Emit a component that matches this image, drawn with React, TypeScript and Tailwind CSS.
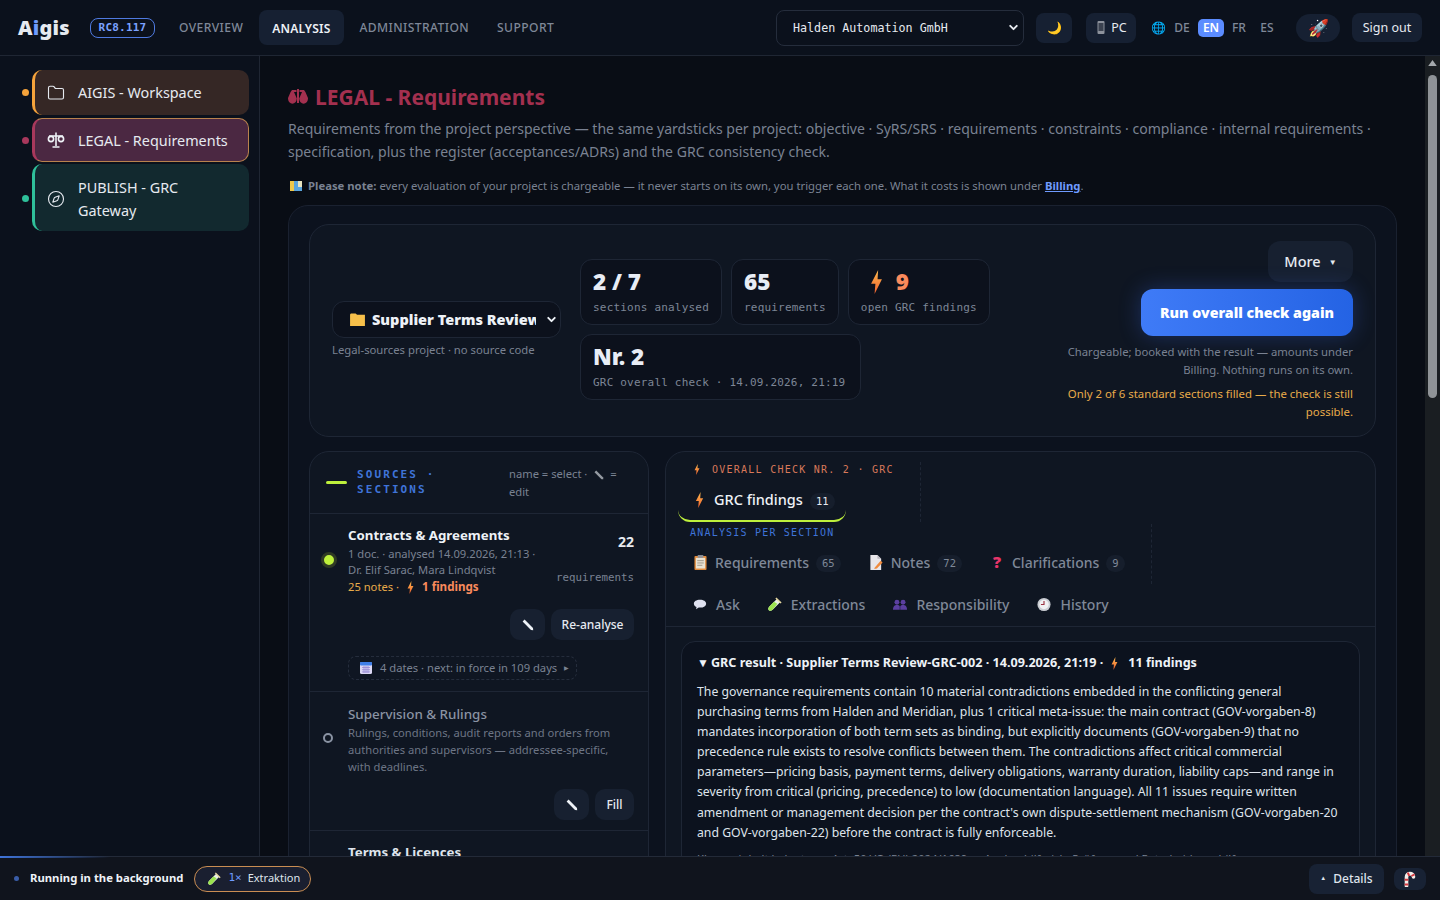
import React from "react";
import { ChevronDown, Folder, Compass } from "lucide-react";

const sans = "font-['Noto_Sans',sans-serif]";
const mono = "font-['DejaVu_Sans_Mono',monospace]";

function Bolt({ className = "w-[12px] h-[20px]" }: { className?: string }) {
  return (
    <svg viewBox="0 0 12 22" className={`shrink-0 ${className}`}>
      <defs>
        <linearGradient id="b" x1="0" y1="0" x2="0" y2="1">
          <stop offset="0" stopColor="#fdba4d" />
          <stop offset="1" stopColor="#f0602f" />
        </linearGradient>
      </defs>
      <path d="M7.5 0 L1 12.5 H5 L4.2 22 L11 8.5 H7 Z" fill="url(#b)" />
    </svg>
  );
}

function Pencil({ className = "w-[12px] h-[12px]" }: { className?: string }) {
  return (
    <svg viewBox="0 0 12 12" className={className}>
      <path d="M0.6 2.6 L2.6 0.6 L11 9 L11.2 11.2 L9 11 Z" fill="#eef2f7" />
    </svg>
  );
}

function ScaleIcon() {
  return (
    <svg viewBox="0 0 18 18" className="w-[18px] h-[18px]" fill="none" stroke="#eef2f7" strokeWidth="1.6">
      <path d="M9 1.5 V15 M5.5 16 H12.5 M2 5 H16" />
      <circle cx="4" cy="8" r="2.6" />
      <circle cx="14" cy="8" r="2.6" />
    </svg>
  );
}

function RedScale() {
  return (
    <svg viewBox="0 0 20 16" className="w-[20px] h-[16px] shrink-0" fill="#a3304f">
      <path d="M4 1 H8.5 V3 H6 L8.6 9 H0 L2.6 3 Z" />
      <path d="M0 9 H8.8 C8.8 16.5 0 16.5 0 9 Z" />
      <path d="M11.5 1 H16 L17.4 3 L20 9 H11.4 L14 3 H11.5 Z" />
      <path d="M11.2 9 H20 C20 16.5 11.2 16.5 11.2 9 Z" />
      <rect x="9" y="0" width="2" height="14" />
    </svg>
  );
}

const TestTube = ({ className = "w-[15px] h-[15px]" }: { className?: string }) => (
  <svg viewBox="0 0 16 16" className={`shrink-0 ${className}`}>
    <path d="M10.5 2 L14 5.5 L6 13.5 C4.6 14.9 3 15 2 14 C1 13 1.1 11.4 2.5 10 Z" fill="#e8f0e4" />
    <path d="M7.4 5.1 L11 7.2 L6 13.5 C4.6 14.9 3 15 2 14 C1 13 1.1 11.4 2.5 10 Z" fill="#9be34f" />
    <path d="M9.5 1 L15 6.5" stroke="#e8d9a0" strokeWidth="1.6" />
  </svg>
);

const Clip = () => (
  <svg viewBox="0 0 14 16" className="w-[13px] h-[15px]">
    <rect x="0.5" y="1" width="13" height="15" rx="1" fill="#e08a3c" />
    <rect x="2" y="3" width="10" height="11.5" fill="#e9e2d2" />
    <rect x="4" y="0" width="6" height="3" fill="#8d9199" />
    <path d="M3.5 6 H10.5 M3.5 8.5 H10.5 M3.5 11 H9" stroke="#9a9486" />
  </svg>
);

const Memo = () => (
  <svg viewBox="0 0 14 16" className="w-[14px] h-[15px]">
    <path d="M1 0 H8.5 L12.5 4 V16 H1 Z" fill="#e8e6ea" />
    <path d="M8.5 0 L12.5 4 H8.5 Z" fill="#b9b7bf" />
    <path d="M6 13 L12 6 L14 8 L8 14.5 L5 15 Z" fill="#f08a3c" />
  </svg>
);

const Bubble = () => (
  <svg viewBox="0 0 16 14" className="w-[15px] h-[13px]">
    <path d="M8 1.5 C12.2 1.5 15 3.4 15 6 C15 8.6 12.2 10.5 8 10.5 L6.5 10.5 L3.5 12.5 L4 9.8 C2.2 9 1 7.6 1 6 C1 3.4 3.8 1.5 8 1.5 Z" fill="#dfe1f0" />
  </svg>
);

const People = () => (
  <svg viewBox="0 0 16 14" className="w-[15px] h-[13px]" fill="#5b3fa0">
    <circle cx="4.5" cy="4.5" r="2.8" />
    <circle cx="11.5" cy="4.5" r="2.8" />
    <path d="M0 13 C0 9 2 7.5 4.5 7.5 C6 7.5 7.2 8 7.7 9 V13 Z" />
    <path d="M16 13 C16 9 14 7.5 11.5 7.5 C10 7.5 8.8 8 8.3 9 V13 Z" />
  </svg>
);

const Clock = () => (
  <svg viewBox="0 0 16 16" className="w-[15px] h-[15px]">
    <circle cx="8" cy="8" r="7.5" fill="#c9ccd2" />
    <circle cx="8" cy="8" r="5.4" fill="#f0f0f2" />
    <path d="M8 4 V8 H4.5" stroke="#9a3040" strokeWidth="1.3" fill="none" />
  </svg>
);

const Cal = () => (
  <svg viewBox="0 0 12 12" className="w-[12px] h-[12px] mr-[8px] shrink-0">
    <rect x="0" y="0" width="12" height="12" rx="1.5" fill="#dcd8f4" />
    <rect x="0" y="0" width="12" height="3.4" rx="1" fill="#3f7fe8" />
    <path d="M2 5.5 H10 M2 7.7 H10 M2 9.9 H10 M4 4 V11 M6 4 V11 M8 4 V11" stroke="#8e7fd0" strokeWidth="0.7" />
  </svg>
);

const Cane = () => (
  <svg viewBox="0 0 14 16" className="w-[14px] h-[16px]">
    <path d="M3.5 15 V6 C3.5 1.5 10.5 1.5 10.5 6" fill="none" stroke="#f4efea" strokeWidth="3.6" strokeLinecap="round" />
    <path d="M3.5 14.5 V12.5 M3.5 9.8 V7.8 M4.6 3.6 L6.4 2.8 M9.6 3.4 L10.4 5" fill="none" stroke="#d8383f" strokeWidth="3.6" />
  </svg>
);

const Phone = () => (
  <svg viewBox="0 0 8 13" className="w-[8px] h-[13px]">
    <rect x="0.5" y="0" width="7" height="13" rx="1" fill="#8d929c" />
    <rect x="1.5" y="2" width="5" height="8" fill="#3b4250" />
  </svg>
);

const MapNote = () => (
  <svg viewBox="0 0 12 10" className="inline w-[12px] h-[10px] mr-[6px] align-[-1px]">
    <rect width="12" height="10" fill="#5aa4dc" />
    <path d="M0 0 H4 V10 H0 Z" fill="#f0c84a" />
    <path d="M8 0 H12 V6 H8 Z" fill="#e8e4c0" />
  </svg>
);

function SideItem({ label, dot, bg, edge, icon }: { label: string; dot: string; bg: string; edge: string; icon: React.ReactNode }) {
  return (
    <div className="flex items-center">
      <span className={`w-[7px] h-[7px] rounded-full mr-[3px] shrink-0 ${dot}`} />
      <div className={`w-[217px] rounded-[10px] flex items-center gap-[13px] pl-[12px] pr-[12px] text-[14.4px] leading-[23px] text-[#e6eaf0] ${bg} ${edge}`}>
        <span className="shrink-0 w-[18px] flex justify-center">{icon}</span>
        <span>{label}</span>
      </div>
    </div>
  );
}

function Stat({ value, label, wide }: { value: React.ReactNode; label: string; wide?: boolean }) {
  return (
    <div className={`h-[66px] rounded-[12px] border border-[#1e2635] bg-[#0c111c] px-[12px] pt-[6px] ${wide ? "w-[281px]" : ""}`}>
      <div className={`${sans} font-black text-[22.5px] leading-[32px] text-[#e8edf5]`}>{value}</div>
      <div className={`${mono} text-[11px] tracking-[0.2px] leading-[16px] mt-[2px] text-[#7d8696] whitespace-nowrap`}>{label}</div>
    </div>
  );
}

function Tab({ icon, label, count, active, wide }: { icon: React.ReactNode; label: string; count?: string; active?: boolean; wide?: boolean }) {
  return (
    <div className={`flex items-center h-[42px] px-[14px] ${wide ? "gap-[9px]" : "gap-[8px]"} font-medium whitespace-nowrap ${active ? "text-[14.5px] text-[#eef2f7] border-b-2 border-[#bef03c] rounded-b-[12px]" : "text-[14px] text-[#7f8898]"}`}>
      <span className="flex items-center w-[14px] justify-center shrink-0">{icon}</span>
      <span>{label}</span>
      {count && <span className={`${mono} -ml-[1px] mt-[3px] text-[10.5px] rounded-full bg-[#161e2c] px-[6px] py-[1px] ${active ? "text-[#e6eaf0]" : "text-[#7f8898]"}`}>{count}</span>}
    </div>
  );
}

export default function App() {
  return (
    <div className={`${sans} h-screen w-full flex flex-col overflow-hidden bg-[#090d15] text-[#e6eaf0]`}>
      {/* top bar */}
      <header className="h-[56px] shrink-0 border-b border-[#1f2633] bg-[#0b111c] flex items-center pl-[18px] pr-[18px]">
        <div className="text-[20px] font-black leading-none tracking-[0.2px] w-[72px]">A<span className="text-[#6f9bff]">i</span>gis</div>
        <span className={`${mono} w-[65px] pt-[1px] justify-center text-[11px] tracking-[0.2px] text-[#7ba2ff] border border-[#4f7ae0] rounded-[8px] h-[20px] flex items-center font-semibold`}>RC8.117</span>
        <nav className="flex items-center gap-[3px] ml-[11px] text-[12.1px] tracking-[0.4px] font-medium text-[#7f8898]">
          <span className="px-[13px] pt-[2px]">OVERVIEW</span>
          <span className="px-[13px] h-[35px] pt-[2px] flex items-center rounded-[8px] bg-[#162032] text-[#eef2f7] text-[12px] tracking-[0.2px] font-semibold">ANALYSIS</span>
          <span className="px-[13px] pt-[2px]">ADMINISTRATION</span>
          <span className="px-[13px] pt-[2px] -ml-[1px]">SUPPORT</span>
        </nav>
        <div className="ml-auto flex items-center">
          <div className={`${mono} w-[248px] h-[36px] rounded-[8px] border border-[#252d3c] bg-[#0b111c] flex items-center justify-between pl-[16px] pr-[3px] text-[11.7px] font-medium text-[#e6eaf0]`}>
            <span className="pt-[2px]">Halden Automation GmbH</span>
            <ChevronDown className="w-[13px] h-[13px]" strokeWidth={3.5} />
          </div>
          <div className="ml-[12px] w-[36px] h-[30px] rounded-[8px] bg-[#162032] flex items-center justify-center text-[12px]">🌙</div>
          <div className="ml-[14px] w-[50px] h-[30px] rounded-[8px] bg-[#162032] flex items-center justify-center text-[12.5px] gap-[6px] pl-[2px]"><Phone /><span className="pt-[2px]">PC</span></div>
          <span className="ml-[15px] w-[13px] text-[12px] leading-none overflow-visible">🌐</span>
          <div className="ml-[8px] flex items-center text-[12px] text-[#7f8898] font-medium">
            <span className="w-[26px] text-center pr-[6px]">DE</span>
            <span className="w-[26px] h-[18px] leading-[18px] text-center rounded-[5px] bg-[#5b8cff] text-white font-semibold">EN</span>
            <span className="w-[30px] text-center">FR</span>
            <span className="w-[26px] text-center">ES</span>
          </div>
          <div className="ml-[16px] w-[44px] h-[28px] rounded-full bg-[#162032] flex items-center justify-center text-[17px]">🚀</div>
          <div className="ml-[12px] w-[70px] h-[29px] pt-[2px] rounded-[8px] bg-[#162032] flex items-center justify-center text-[12.5px]">Sign out</div>
        </div>
      </header>

      <div className="flex flex-1 min-h-0">
        {/* sidebar */}
        <aside className="w-[260px] shrink-0 border-r border-[#1f2633] bg-[#0b111c] pl-[22px] pt-[14px] flex flex-col gap-[3px]">
          <SideItem label="AIGIS - Workspace" dot="bg-[#f5a33b]" bg="bg-[#352725] py-[11px]" edge="border-l-[3px] border-[#f5a33b]" icon={<Folder className="w-[18px] h-[18px]" strokeWidth={1.5} />} />
          <SideItem label="LEGAL - Requirements" dot="bg-[#a8385c]" bg="bg-[#4b2842] py-[9.5px]" edge="border-[1.5px] border-l-[3px] border-[#b9824d] border-l-[#a8385c]" icon={<ScaleIcon />} />
          <SideItem label="PUBLISH - GRC Gateway" dot="bg-[#2fc09a]" bg="bg-[#12292f] pt-[12px] pb-[9px] -mt-[1px]" edge="border-l-[3px] border-[#2fc09a]" icon={<Compass className="w-[18px] h-[18px]" strokeWidth={1.5} />} />
        </aside>

        {/* main */}
        <main className="flex-1 min-w-0 overflow-y-auto [scrollbar-width:none] bg-[#090d15] pl-[28px] pr-[28px] pt-[26px]">
          <h1 className="flex items-center gap-[7px] text-[21px] font-bold leading-[30px] text-[#a3304f]"><RedScale /> LEGAL - Requirements</h1>
          <p className="mt-[5px] text-[14.05px] leading-[23px] text-[#7a8292]">
            Requirements from the project perspective — the same yardsticks per project: objective · SyRS/SRS · requirements · constraints · compliance · internal requirements · specification, plus the register (acceptances/ADRs) and the GRC consistency check.
          </p>
          <p className="mt-[14px] text-[11.3px] leading-[18px] text-[#7a8292] pl-[2px]">
            <MapNote /><b className="font-bold">Please note:</b> every evaluation of your project is chargeable — it never starts on its own, you trigger each one. What it costs is shown under <span className="font-bold underline text-[#6f9bff]">Billing</span>.
          </p>

          <section className="mt-[10px] rounded-[20px] border border-[#1a2130] bg-[#0c121e] px-[20px] pt-[18px] pb-[500px]">
            {/* summary */}
            <div className="h-[213px] rounded-[20px] border border-[#1e2635] bg-[#0f1622] flex items-center pl-[22px] pr-[22px]">
              <div className="w-[248px] shrink-0 -mt-[1px]">
                <div className="w-[229px] h-[37px] rounded-[12px] border border-[#1e2635] bg-[#0c111c] flex items-center pl-[17px] pr-[2px] text-[14.5px] font-black text-[#eef2f7] whitespace-nowrap">
                  <svg viewBox="0 0 16 14" className="w-[15px] h-[13px] mr-[7px] shrink-0"><path d="M0 2 C0 1 1 0.5 1.5 0.5 H6 L7.5 2 H16 V14 H0 Z" fill="#f7c04a" /></svg>
                  <span className="w-[164px] overflow-hidden">Supplier Terms Review-GRC</span>
                  <ChevronDown className="w-[13px] h-[13px] ml-auto shrink-0" strokeWidth={3.5} />
                </div>
                <p className="mt-[3px] text-[11.3px] leading-[18px] text-[#7a8292]">Legal-sources project · no source code</p>
              </div>
              <div className="flex flex-col gap-[9px] -mt-[3px]">
                <div className="flex gap-[9px]">
                  <Stat value="2 / 7" label="sections analysed" />
                  <Stat value="65" label="requirements" />
                  <Stat value={<span className="flex items-center gap-[13px] pl-[9px] text-[#fa8a5c]"><Bolt className="w-[13px] h-[24px]" />9</span>} label="open GRC findings" />
                </div>
                <Stat wide value="Nr. 2" label="GRC overall check · 14.09.2026, 21:19" />
              </div>
              <div className="ml-auto w-[300px] flex flex-col items-end self-start pt-[16px]">
                <div className="w-[85px] h-[41px] rounded-[12px] bg-[#172030] flex items-center justify-center gap-[8px] text-[14.5px] font-medium">More <span className="text-[8px]">▼</span></div>
                <div className="mt-[7px] w-[212px] h-[47px] rounded-[12px] bg-gradient-to-r from-[#3f7bf7] to-[#2463e4] shadow-[0_0_22px_rgba(59,110,240,0.3)] flex items-center justify-center text-[14.2px] font-black text-white">Run overall check again</div>
                <p className="mt-[7px] text-right text-[11.3px] leading-[18px] text-[#7a8292]">Chargeable; booked with the result — amounts under Billing. Nothing runs on its own.</p>
                <p className="mt-[6px] text-right text-[11.4px] leading-[18px] text-[#e8ab4a]">Only 2 of 6 standard sections filled — the check is still possible.</p>
              </div>
            </div>

            <div className="mt-[14px] flex gap-[16px] items-start">
              {/* sources */}
              <div className="w-[340px] shrink-0 rounded-t-[20px] border border-[#1e2635] bg-[#0f1622]">
                <div className="h-[62px] flex items-center pl-[16px] pr-[20px] border-b border-[#1e2635]">
                  <span className="w-[21px] h-[3px] rounded-full bg-[#bef03c] shrink-0" />
                  <span className={`${mono} ml-[10px] w-[100px] shrink-0 -mt-[2px] font-semibold text-[11px] leading-[15px] tracking-[2.1px] text-[#3f74d9]`}>SOURCES · SECTIONS</span>
                  <span className="ml-[52px] text-[11.2px] leading-[18px] text-[#7a8292]">name = select · <Pencil className="inline w-[10px] h-[10px] opacity-60 ml-[4px] mr-[3px]" /> = edit</span>
                </div>
                <div className="h-[178px] border-b border-[#1e2635] pl-[11px] pr-[14px] pt-[12px]">
                  <div className="flex items-start">
                    <span className="mt-[26px] w-[16px] h-[16px] rounded-full bg-[#bef03c] border-[3px] border-[#2f3a24] shrink-0" />
                    <div className="ml-[11px] flex-1 min-w-0">
                      <div className="text-[13.25px] leading-[18px] font-bold text-[#eef2f7]">Contracts &amp; Agreements</div>
                      <p className="text-[11.2px] leading-[16px] text-[#7a8292] w-[196px] mt-[2px]">1 doc. · analysed 14.09.2026, 21:13 · Dr. Elif Sarac, Mara Lindqvist</p>
                      <div className="flex items-center text-[11.2px] leading-[18px] text-[#e8ab4a]">25 notes · <Bolt className="mx-[8px] w-[7px] h-[13px]" /><span className="font-bold text-[#fa8a5c] text-[11.6px]">1 findings</span></div>
                    </div>
                    <div className="text-right shrink-0 -ml-[40px]">
                      <div className="text-[14px] font-bold leading-[18px] mt-[7px]">22</div>
                      <div className={`${mono} text-[10.8px] text-[#7a8292] mt-[19px]`}>requirements</div>
                    </div>
                  </div>
                  <div className="mt-[13px] flex justify-end gap-[6px]">
                    <div className="w-[35px] h-[31px] rounded-[10px] bg-[#172030] flex items-center justify-center"><Pencil /></div>
                    <div className="w-[83px] h-[31px] rounded-[10px] bg-[#172030] flex items-center justify-center text-[12px] font-medium">Re-analyse</div>
                  </div>
                  <div className="mt-[16px] ml-[27px] w-[229px] h-[24px] rounded-[8px] border border-dashed border-[#252d3c] flex items-center pl-[11px] text-[11.2px] text-[#7a8292] whitespace-nowrap">
                    <Cal />4 dates · next: in force in 109 days <span className="text-[6px] ml-[7px]">▶</span>
                  </div>
                </div>
                <div className="h-[139px] border-b border-[#1e2635] pl-[13px] pr-[14px] pt-[13px]">
                  <div className="flex items-start">
                    <span className="mt-[28px] w-[10px] h-[10px] rounded-full border-2 border-[#8a93a3] shrink-0" />
                    <div className="ml-[15px]">
                      <div className="text-[13.4px] leading-[18px] font-medium text-[#8a93a3]">Supervision &amp; Rulings</div>
                      <p className="text-[11.2px] leading-[17px] text-[#6d7585] mt-[1px] w-[270px]">Rulings, conditions, audit reports and orders from authorities and supervisors — addressee-specific, with deadlines.</p>
                    </div>
                  </div>
                  <div className="mt-[14px] flex justify-end gap-[6px]">
                    <div className="w-[35px] h-[31px] rounded-[10px] bg-[#172030] flex items-center justify-center"><Pencil /></div>
                    <div className="w-[39px] h-[31px] rounded-[10px] bg-[#172030] flex items-center justify-center text-[12px] font-medium">Fill</div>
                  </div>
                </div>
                <div className="h-[120px] pl-[38px] pt-[12px] text-[13.25px] font-bold leading-[18px] text-[#dfe4ec]">Terms &amp; Licences</div>
              </div>

              {/* analysis */}
              <div className="flex-1 min-w-0 rounded-t-[20px] border border-[#1e2635] bg-[#0f1622]">
                <div className="border-b border-[#1e2635] pt-[10px]">
                  <div className="pl-[12px] w-[255px] h-[60px] border-r border-dashed border-[#1e2635]">
                    <div className={`${mono} pl-[16px] h-[14px] flex items-center text-[10px] tracking-[1.25px] text-[#d9795a] font-medium`}><Bolt className="w-[6px] h-[11px] mr-[12px]" />OVERALL CHECK NR. 2 · GRC</div>
                    <div className="w-[168px] mt-[4px]"><Tab active icon={<Bolt className="w-[9px] h-[16px]" />} label="GRC findings" count="11" /></div>
                  </div>
                  <div className="mt-[2px] pl-[24px] pt-[2px] w-[486px] h-[60px] border-r border-dashed border-[#1e2635]">
                    <div className={`${mono} h-[14px] leading-[14px] text-[10px] tracking-[1.2px] text-[#3f74d9] font-medium`}>ANALYSIS PER SECTION</div>
                    <div className="-ml-[11px] flex mt-[1px]">
                      <Tab icon={<Clip />} label="Requirements" count="65" />
                      <Tab icon={<Memo />} label="Notes" count="72" />
                      <Tab icon={<span className="text-[#e8356a] font-black text-[16px]">?</span>} label="Clarifications" count="9" />
                    </div>
                  </div>
                  <div className="pl-[13px] flex h-[43px] -mt-[1px]">
                    <Tab wide icon={<Bubble />} label="Ask" />
                    <Tab wide icon={<TestTube />} label="Extractions" />
                    <Tab wide icon={<People />} label="Responsibility" />
                    <Tab wide icon={<Clock />} label="History" />
                  </div>
                </div>
                <div className="px-[15px] pt-[14px]">
                  <div className="rounded-[14px] border border-[#1e2635] bg-[#0c121e] px-[15px] pt-[11px]">
                    <div className="flex items-center text-[12.6px] leading-[20px] font-bold text-[#eef2f7] whitespace-nowrap">
                      <span className="text-[12px] mr-[2px]">▼</span>GRC result · Supplier Terms Review-GRC-002 · 14.09.2026, 21:19 · <Bolt className="mx-[8px] w-[7px] h-[13px]" /><span className="ml-[2px]">11 findings</span>
                    </div>
                    <p className="mt-[9px] text-[12.25px] leading-[20.1px] text-[#dfe4ec]">
                      The governance requirements contain 10 material contradictions embedded in the conflicting general purchasing terms from Halden and Meridian, plus 1 critical meta-issue: the main contract (GOV-vorgaben-8) mandates incorporation of both term sets as binding, but explicitly documents (GOV-vorgaben-9) that no precedence rule exists to resolve conflicts between them. The contradictions affect critical commercial parameters—pricing basis, payment terms, delivery obligations, warranty duration, liability caps—and range in severity from critical (pricing, precedence) to low (documentation language). All 11 issues require written amendment or management decision per the contract's own dispute-settlement mechanism (GOV-vorgaben-20 and GOV-vorgaben-22) before the contract is fully enforceable.
                    </p>
                    <p className="mt-[7px] text-[11.2px] leading-[18px] text-[#7a8292] h-[300px]">Klauseninhalt belegt, aus Art. 50 VO (EU) 2024/1689 — Analog hilfreich: Prüfung und Entscheidungshilfe</p>
                  </div>
                </div>
              </div>
            </div>
          </section>
        </main>

        {/* scrollbar */}
        <div className="w-[15px] shrink-0 bg-[#1a1e22] flex flex-col items-center pt-[3px]">
          <svg viewBox="0 0 10 7" className="w-[9px] h-[6px] mt-[1px]"><path d="M5 0 L10 7 H0 Z" fill="#a4a8ac" /></svg>
          <div className="mt-[9px] w-[9px] h-[323px] rounded-full bg-[#8f9397]" />
        </div>
      </div>

      {/* bottom bar */}
      <footer className="h-[44px] shrink-0 relative border-t border-[#232a38] bg-[#10141d] flex items-center pl-[14px] pr-[14px]">
        <span className="absolute left-0 -top-px h-[2px] w-[110px] bg-gradient-to-r from-[#3f74d9] to-transparent" />
        <span className="w-[5px] h-[5px] rounded-full bg-[#3a5da8]" />
        <span className="ml-[11px] text-[11.3px] font-bold text-[#eef2f7]">Running in the background</span>
        <div className="ml-[11px] w-[117px] h-[26px] rounded-full border border-[#c98d52] bg-[#1a1f30] flex items-center pl-[12px] text-[11px] whitespace-nowrap">
          <TestTube className="w-[14px] h-[14px]" />
          <span className={`${mono} ml-[7px] text-[#6f9bff]`}>1×</span>
          <span className="ml-[6px] text-[#dfe4ec]">Extraktion</span>
        </div>
        <div className="ml-auto w-[75px] h-[30px] rounded-[8px] bg-[#182234] flex items-center justify-center gap-[7px] text-[12px] font-medium text-[#dfe4ec]"><span className="text-[6px]">▲</span>Details</div>
        <div className="ml-[10px] w-[32px] h-[22px] rounded-[8px] bg-[#182234] flex items-center justify-center"><Cane /></div>
      </footer>
    </div>
  );
}
